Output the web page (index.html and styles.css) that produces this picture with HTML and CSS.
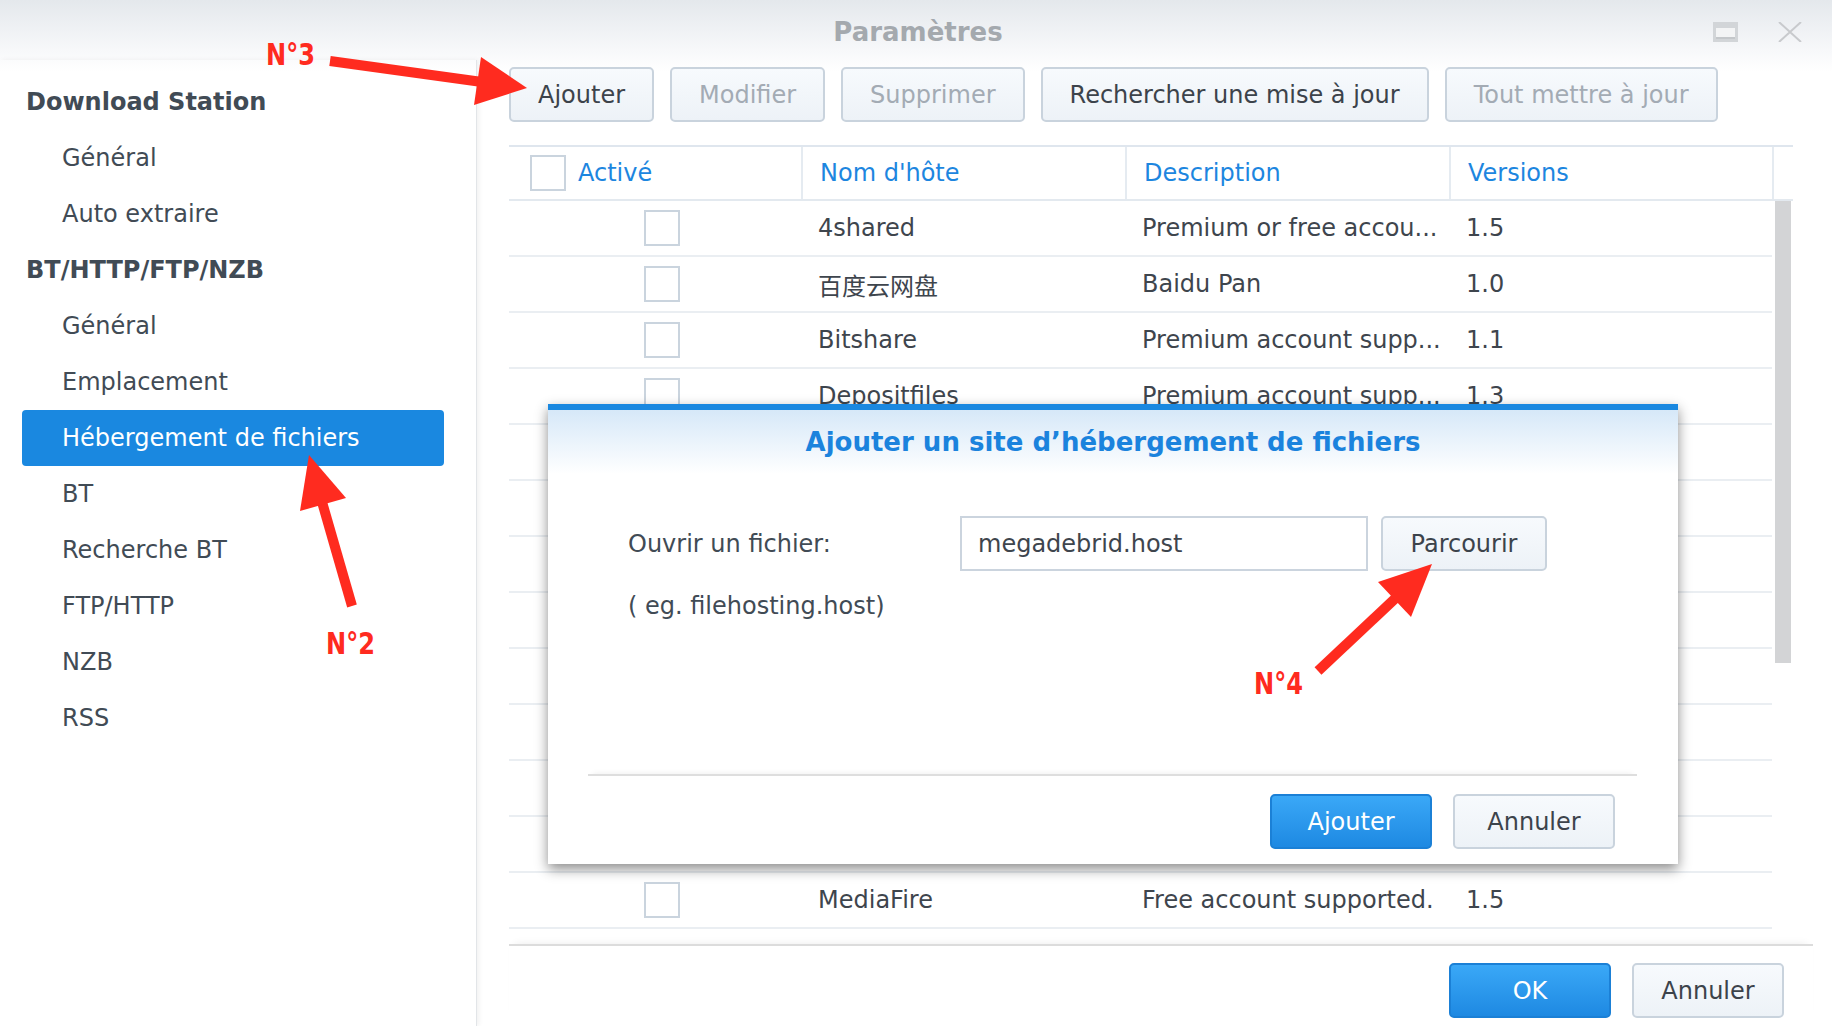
FILE: index.html
```html
<!DOCTYPE html>
<html lang="fr">
<head>
  <meta charset="UTF-8" />
  <title>Paramètres</title>
  <link rel="stylesheet" href="styles.css">
</head>
<body>
  <div class="window">
    <header class="titlebar">
      <span class="title">Paramètres</span>
      <div class="win-controls">
        <svg width="25" height="20" viewBox="0 0 25 20"><rect x="0" y="0" width="25" height="20" fill="#d2d5d8"/><rect x="3" y="6" width="19" height="9" fill="#f3f4f5"/><rect x="3" y="15" width="19" height="2" fill="#c4c7ca"/></svg>
        <svg width="24" height="20" viewBox="0 0 24 20"><path d="M1 0 L23 20 M23 0 L1 20" stroke="#c8cacd" stroke-width="2" fill="none"/></svg>
      </div>
    </header>

    <div class="layout">
      <nav class="sidebar">
        <div class="nav-head">Download Station</div>
        <div class="nav-item">Général</div>
        <div class="nav-item">Auto extraire</div>
        <div class="nav-head">BT/HTTP/FTP/NZB</div>
        <div class="nav-item">Général</div>
        <div class="nav-item">Emplacement</div>
        <div class="nav-item active">Hébergement de fichiers</div>
        <div class="nav-item">BT</div>
        <div class="nav-item">Recherche BT</div>
        <div class="nav-item">FTP/HTTP</div>
        <div class="nav-item">NZB</div>
        <div class="nav-item">RSS</div>
      </nav>

      <main class="content">
        <div class="toolbar">
          <button class="btn">Ajouter</button>
          <button class="btn" disabled>Modifier</button>
          <button class="btn" disabled>Supprimer</button>
          <button class="btn">Rechercher une mise à jour</button>
          <button class="btn" disabled>Tout mettre à jour</button>
        </div>

        <div class="grid">
          <div class="grid-head">
            <div class="col col-first"><span class="check"></span>Activé</div>
            <div class="col">Nom d'hôte</div>
            <div class="col">Description</div>
            <div class="col">Versions</div>
            <div class="col"></div>
          </div>
          <div class="grid-body">
            <div class="rows">
              <div class="row"><div class="cell cell-check"><span class="check"></span></div><div class="cell">4shared</div><div class="cell">Premium or free accou...</div><div class="cell">1.5</div></div>
              <div class="row"><div class="cell cell-check"><span class="check"></span></div><div class="cell">百度云网盘</div><div class="cell">Baidu Pan</div><div class="cell">1.0</div></div>
              <div class="row"><div class="cell cell-check"><span class="check"></span></div><div class="cell">Bitshare</div><div class="cell">Premium account supp...</div><div class="cell">1.1</div></div>
              <div class="row"><div class="cell cell-check"><span class="check"></span></div><div class="cell">Depositfiles</div><div class="cell">Premium account supp...</div><div class="cell">1.3</div></div>
              <!-- rows hidden under the dialog -->
              <div class="row"></div>
              <div class="row"></div>
              <div class="row"></div>
              <div class="row"></div>
              <div class="row"></div>
              <div class="row"></div>
              <div class="row"></div>
              <div class="row"></div>
              <div class="row"><div class="cell cell-check"><span class="check"></span></div><div class="cell">MediaFire</div><div class="cell">Free account supported.</div><div class="cell">1.5</div></div>
            </div>
            <div class="scrollbar"><div class="thumb"></div></div>
          </div>
        </div>

        <div class="footer">
          <button class="btn btn-primary btn-wide">OK</button>
          <button class="btn btn-wide btn-cancel">Annuler</button>
        </div>
      </main>
    </div>
  </div>

  <div class="dialog">
    <div class="dialog-head">Ajouter un site d’hébergement de fichiers</div>
    <div class="dialog-body">
      <div class="form-row">
        <label class="form-label">Ouvrir un fichier:</label>
        <input class="field" type="text" value="megadebrid.host" />
        <button class="btn btn-browse">Parcourir</button>
      </div>
      <div class="hint">( eg. filehosting.host)</div>
    </div>
    <div class="dialog-foot">
      <button class="btn btn-primary btn-wide">Ajouter</button>
      <button class="btn btn-wide">Annuler</button>
    </div>
  </div>

  <!-- red annotations drawn over the screenshot -->
  <svg class="marks" width="1832" height="1026" viewBox="0 0 1832 1026">
    <g fill="#ff2b1f" stroke="#ff2b1f">
      <line x1="330" y1="61" x2="482" y2="82" stroke-width="10"/>
      <polygon points="527,88 481,57 474,105" stroke="none"/>
      <line x1="352" y1="606" x2="320" y2="495" stroke-width="10"/>
      <polygon points="309,455 346,498 300,511" stroke="none"/>
      <line x1="1318" y1="671" x2="1400" y2="594" stroke-width="10"/>
      <polygon points="1432,564 1411,617 1378,582" stroke="none"/>
    </g>
    <text class="mark-label" x="266" y="65" textLength="49" lengthAdjust="spacingAndGlyphs">N°3</text>
    <text class="mark-label" x="326" y="654" textLength="49" lengthAdjust="spacingAndGlyphs">N°2</text>
    <text class="mark-label" x="1254" y="694" textLength="49" lengthAdjust="spacingAndGlyphs">N°4</text>
  </svg>
</body>
</html>
```

FILE: styles.css
```css
body {
  margin: 0;
  font-family: 'DejaVu Sans', Verdana, 'Noto Sans CJK SC', sans-serif;
  color: #414b55;
  background: #fff;
}

.window {
  width: 1832px;
  height: 1026px;
  display: flex;
  flex-direction: column;
  overflow: hidden;
  background: linear-gradient(#e4e8ec 0, #f7f8fa 50px, #fff 72px);
}

.titlebar {
  height: 60px;
  flex: none;
  display: flex;
  align-items: center;
  justify-content: center;
  position: relative;
}

.title {
  font-size: 26px;
  font-weight: bold;
  color: #a4a9ae;
  margin-left: 4px;
  margin-top: 4px;
}

.win-controls {
  position: absolute;
  right: 30px;
  top: 22px;
  display: flex;
  gap: 40px;
}

.layout {
  flex: 1;
  display: flex;
  min-height: 0;
}

/* sidebar */
.sidebar {
  width: 476px;
  flex: none;
  padding-top: 14px;
  border-right: 1px solid #e2e5e8;
  box-shadow: 2px 0 5px rgba(0, 0, 0, 0.06);
}

.nav-head, .nav-item {
  height: 56px;
  line-height: 56px;
  margin: 0 32px 0 22px;
  font-size: 24px;
  white-space: nowrap;
}

.nav-head {
  font-weight: bold;
  padding-left: 4px;
}

.nav-item {
  padding-left: 40px;
  border-radius: 4px;
}

.nav-item.active {
  background: #1a88e0;
  color: #fff;
}

/* main panel */
.content {
  flex: 1;
  display: flex;
  flex-direction: column;
  min-width: 0;
}

.toolbar {
  display: flex;
  gap: 16px;
  padding: 7px 32px 0;
  margin-bottom: 23px;
}

.btn {
  height: 55px;
  padding: 0 27px;
  font-family: inherit;
  font-size: 24px;
  color: #3c434b;
  background: linear-gradient(#f7fafd, #edf2f7);
  border: 2px solid #c9d3dd;
  border-radius: 5px;
}

.btn:disabled {
  color: #a3abb4;
}

.btn-primary {
  color: #fff;
  background: linear-gradient(#3aa8f7, #1e89e2);
  border-color: #1b80d6;
}

.btn-wide {
  width: 162px;
  padding: 0;
}

.grid {
  margin: 0 39px 0 32px;
  display: flex;
  flex-direction: column;
  flex: 1;
  min-height: 0;
}

.grid-head {
  display: grid;
  grid-template-columns: 292px 324px 324px 323px 21px;
  height: 52px;
  border-top: 2px solid #dfe6ee;
  border-bottom: 2px solid #e3e9ef;
  color: #1d86df;
  font-size: 24px;
}

.col {
  display: flex;
  align-items: center;
  padding-left: 17px;
  border-left: 2px solid #e5ebf1;
}

.col-first {
  border-left: none;
  padding-left: 21px;
}

.col-first .check {
  margin-right: 12px;
}

.check {
  display: inline-block;
  width: 32px;
  height: 32px;
  border: 2px solid #cad4de;
  background: #fff;
  flex: none;
}

.grid-body {
  flex: 1;
  display: flex;
  overflow: hidden;
}

.rows {
  flex: 1;
}

.row {
  display: grid;
  grid-template-columns: 292px 324px 324px 323px;
  height: 54px;
  border-bottom: 2px solid #eaeef2;
  font-size: 24px;
  color: #3e454d;
}

.cell {
  display: flex;
  align-items: center;
  padding-left: 17px;
  white-space: nowrap;
}

.cell-check {
  padding-left: 135px;
}

.scrollbar {
  width: 21px;
  flex: none;
  padding-left: 3px;
}

.thumb {
  width: 16px;
  height: 462px;
  background: #d3d4d6;
}

.footer {
  flex: none;
  display: flex;
  justify-content: flex-end;
  gap: 21px;
  height: 82px;
  box-sizing: border-box;
  margin: 0 19px 0 32px;
  padding: 17px 29px 0 0;
  border-top: 2px solid #dcdcdc;
  box-shadow: 0 -6px 8px -6px rgba(0, 0, 0, 0.08);
}

.footer .btn-cancel {
  width: 152px;
}

/* modal dialog */
.dialog {
  position: absolute;
  left: 548px;
  top: 404px;
  width: 1130px;
  height: 460px;
  box-sizing: border-box;
  border-top: 6px solid #1a88e0;
  background: #fff;
  box-shadow: 0 5px 12px rgba(0, 0, 0, 0.45);
  display: flex;
  flex-direction: column;
}

.dialog-head {
  height: 64px;
  line-height: 64px;
  text-align: center;
  font-size: 26px;
  font-weight: bold;
  color: #1b83dd;
  background: linear-gradient(#d6e8f8, #fff);
}

.dialog-body {
  flex: 1;
  padding: 42px 0 0 80px;
}

.form-row {
  display: flex;
  align-items: center;
  gap: 13px;
}

.form-label {
  width: 319px;
  font-size: 24px;
  color: #414b55;
}

.field {
  width: 408px;
  height: 55px;
  box-sizing: border-box;
  border: 2px solid #cbd4de;
  padding: 0 16px;
  font-family: inherit;
  font-size: 24px;
  color: #3e454d;
}

.btn-browse {
  width: 166px;
  padding: 0;
}

.hint {
  margin-top: 20px;
  font-size: 24px;
  line-height: 30px;
}

.dialog-foot {
  height: 90px;
  margin: 0 41px 0 40px;
  padding: 18px 22px 0 0;
  box-sizing: border-box;
  display: flex;
  justify-content: flex-end;
  gap: 21px;
  border-top: 2px solid #dedede;
  box-shadow: 0 -5px 6px -5px rgba(0, 0, 0, 0.08);
}

.marks {
  position: absolute;
  left: 0;
  top: 0;
  pointer-events: none;
}

.mark-label {
  font-family: 'Liberation Sans Narrow', 'DejaVu Sans Condensed', 'Liberation Sans', sans-serif;
  font-weight: bold;
  font-size: 30px;
  fill: #ff2b1f;
}
```
